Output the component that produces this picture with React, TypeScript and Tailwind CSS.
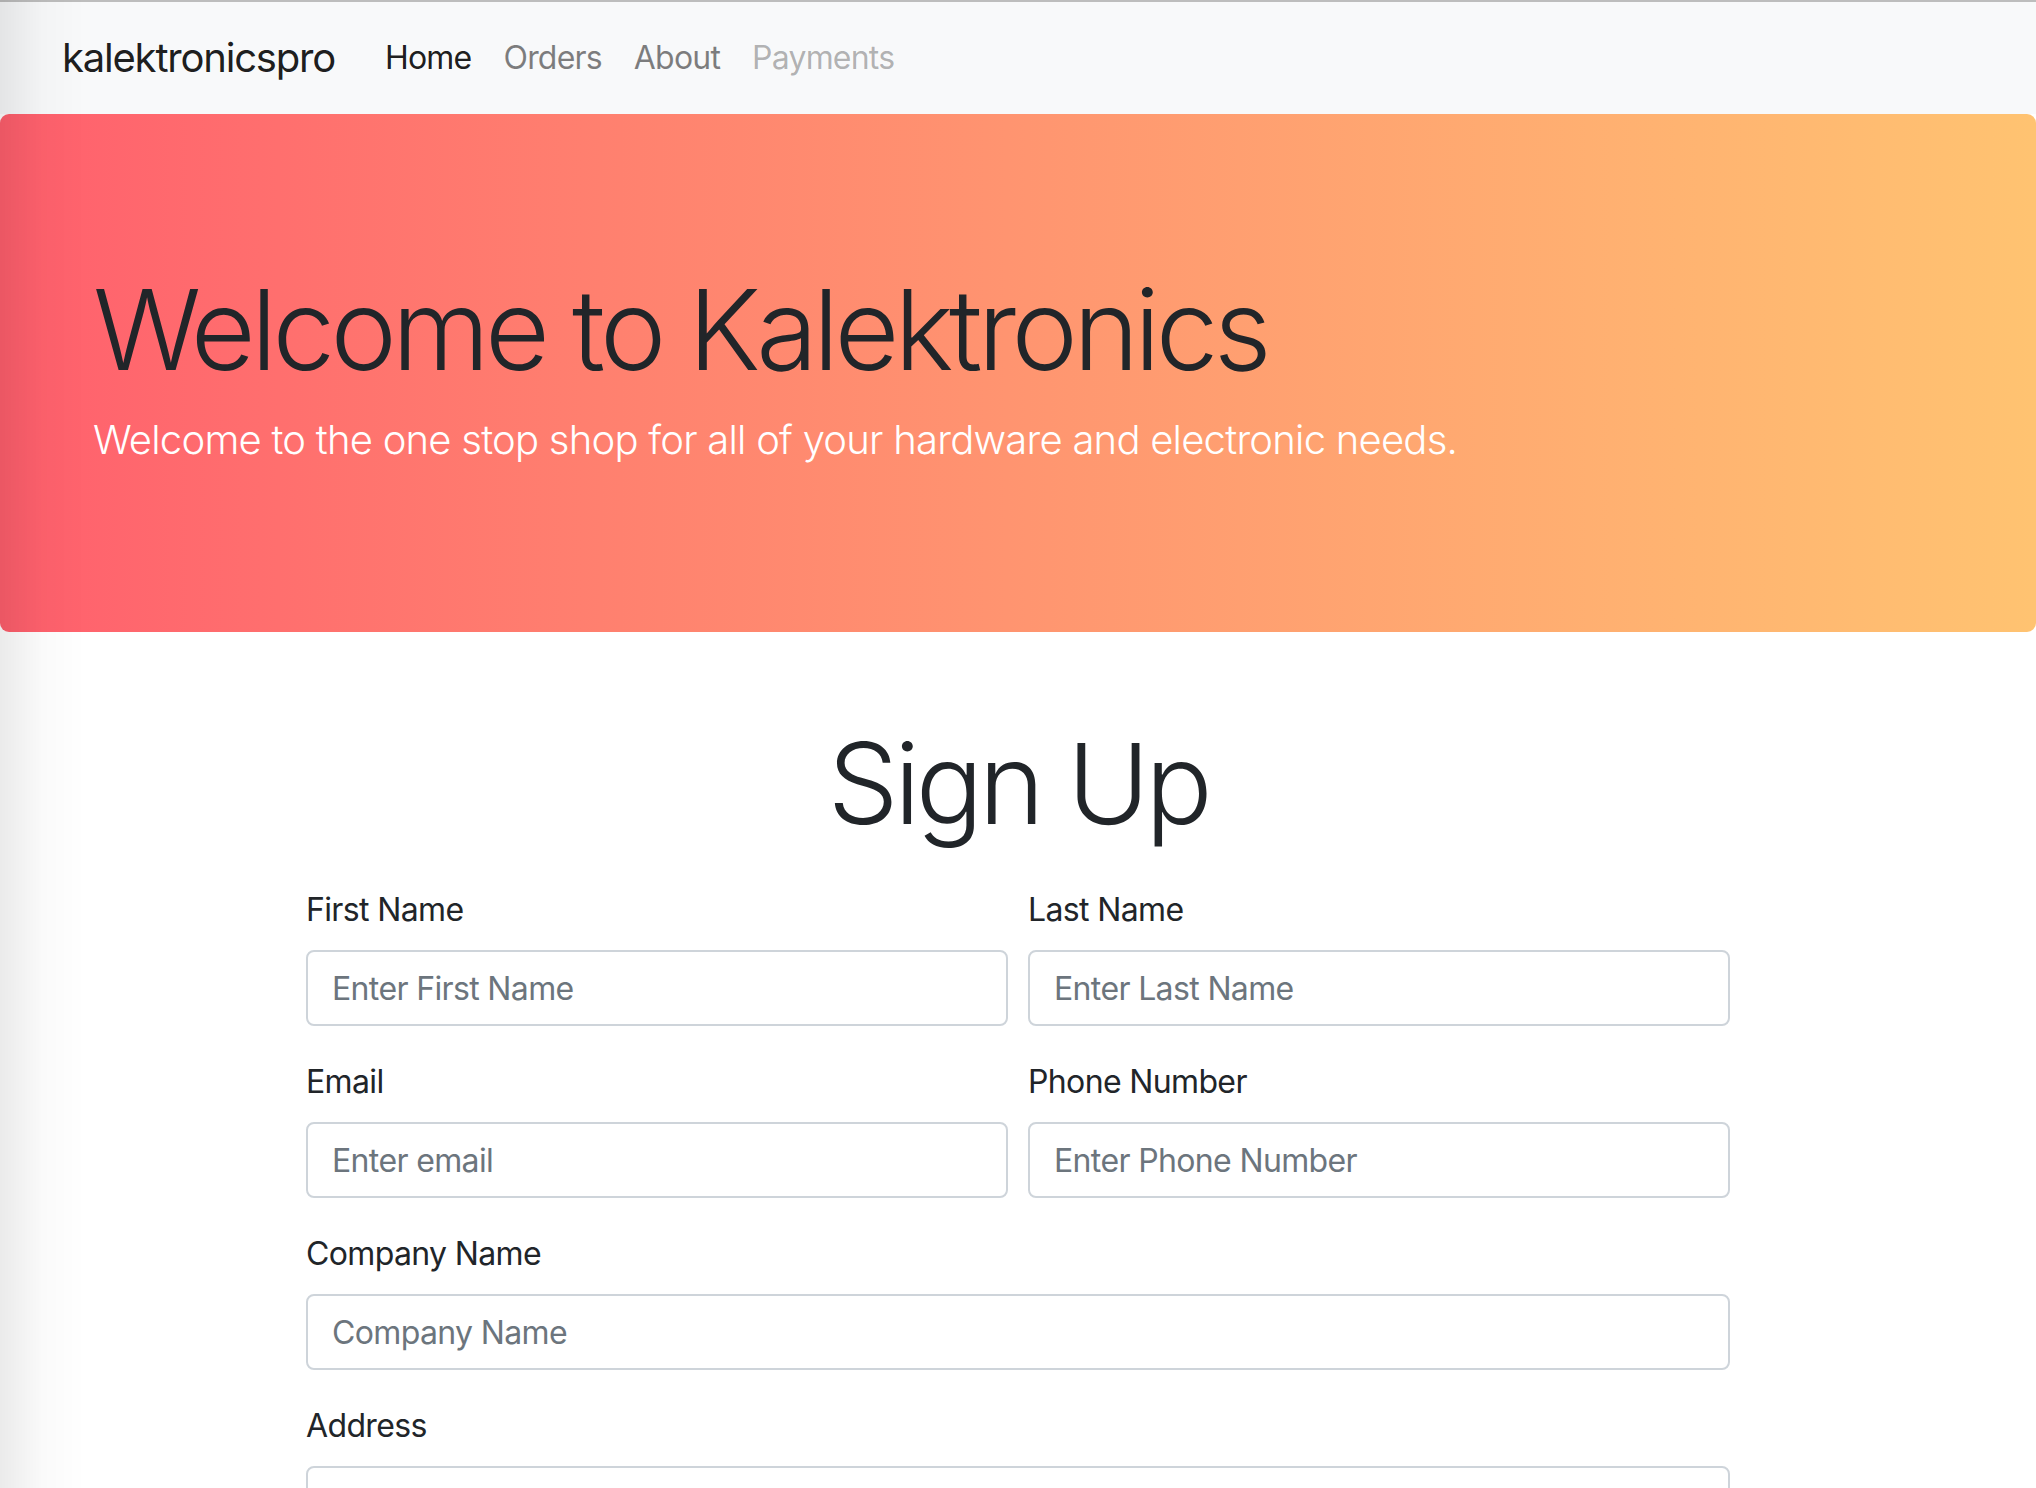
import React from 'react';

type Field = { label: string; placeholder: string };

const NAV_LINKS = [
  { label: 'Home', cls: 'text-black/90' },
  { label: 'Orders', cls: 'text-black/50' },
  { label: 'About', cls: 'text-black/50' },
  { label: 'Payments', cls: 'text-black/30' },
];

const FormField: React.FC<Field> = ({ label, placeholder }) => (
  <div className="flex flex-col mb-[32px]">
    <label className="text-[32px] leading-[48px] tracking-[-0.02em] text-[#212529] mb-[16px]">{label}</label>
    <input
      type="text"
      placeholder={placeholder}
      className="h-[76px] w-full rounded-[8px] border-2 border-[#ced4da] bg-white px-[24px] text-[32px] tracking-[-0.02em] text-[#495057] placeholder:text-[#6c757d] outline-none"
    />
  </div>
);

const App: React.FC = () => {
  return (
    <div className="min-h-screen bg-white font-['Inter',sans-serif] relative">
      {/* window edge shade */}
      <div className="pointer-events-none fixed inset-y-0 left-0 z-10 w-[85px] bg-gradient-to-r from-black/[0.08] via-black/[0.02] to-transparent" />

      {/* Navbar */}
      <nav className="h-[114px] bg-[#f8f9fa] border-t-2 border-[#bdbdbd] flex items-center pl-[62px]">
        <span className="text-[40px] leading-[60px] tracking-[-0.03em] text-black/90 mr-[34px]">kalektronicspro</span>
        <ul className="flex items-center">
          {NAV_LINKS.map((l) => (
            <li key={l.label}>
              <a className={`block px-[16px] text-[32px] leading-[48px] tracking-[-0.025em] ${l.cls}`}>{l.label}</a>
            </li>
          ))}
        </ul>
      </nav>

      {/* Jumbotron */}
      <header className="h-[518px] rounded-[9px] bg-gradient-to-r from-[#ff5f6d] to-[#ffc371] pl-[93px] pt-[148px]">
        <h1 className="text-[112px] leading-[134px] font-light text-[#212529] tracking-[-0.042em]">
          Welcome to Kalektronics
        </h1>
        <p className="mt-[14px] text-[40px] leading-[60px] font-light text-white tracking-[-0.019em]">
          Welcome to the one stop shop for all of your hardware and electronic needs.
        </p>
      </header>

      {/* Sign up */}
      <main className="pt-[84px] pb-[80px]">
        <h2 className="text-center text-[112px] leading-[134px] font-light text-[#212529] tracking-[-0.04em]">
          Sign Up
        </h2>
        <form className="w-[1424px] mx-auto mt-[36px]">
          <div className="grid grid-cols-2 gap-x-[20px]">
            <FormField label="First Name" placeholder="Enter First Name" />
            <FormField label="Last Name" placeholder="Enter Last Name" />
            <FormField label="Email" placeholder="Enter email" />
            <FormField label="Phone Number" placeholder="Enter Phone Number" />
          </div>
          <FormField label="Company Name" placeholder="Company Name" />
          <FormField label="Address" placeholder="1234 Main St" />
        </form>
      </main>
    </div>
  );
};

export default App;
